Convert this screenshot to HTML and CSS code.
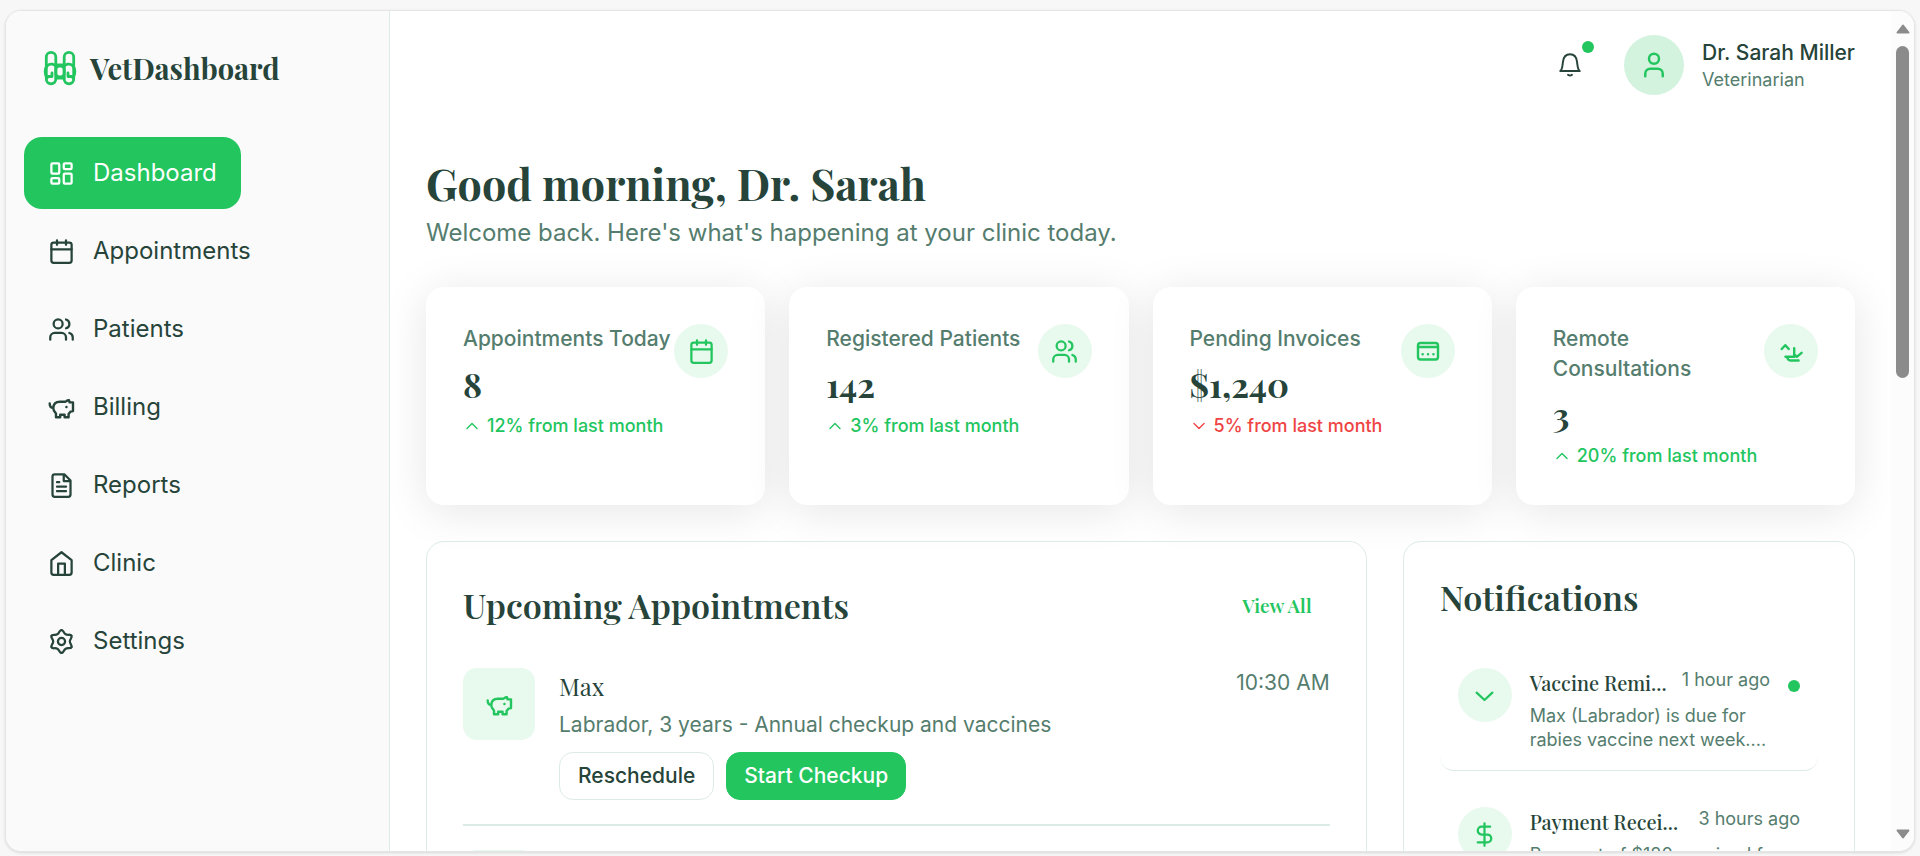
FILE: index.html
```html
<!DOCTYPE html>
<html lang="en">
<head>
<meta charset="utf-8">
<title>VetDashboard</title>
<meta name="viewport" content="width=device-width, initial-scale=1">
<link rel="stylesheet" href="styles.css">
</head>
<body>
<svg class="sprite" aria-hidden="true">
  <symbol id="i-logo" viewBox="0 0 36 36"><rect x="4.300" y="2.300" width="9.500" height="31.500" rx="4.700"/><rect x="22.200" y="2.300" width="9.500" height="31.500" rx="4.700"/><path d="M5 28C2.500 24.500 2.500 18.500 5.500 15.500C8 13 13 14 14.500 17M31 28C33.500 24.500 33.500 18.500 30.500 15.500C28 13 23 14 21.500 17"/><rect x="13.800" y="16" width="8.400" height="11" rx="3.500"/><path d="M14 15H22M14 28H22M6 26.500H10V23M30 26.500H26V23"/></symbol>
  <symbol id="i-grid" viewBox="0 0 24 24"><rect x="3" y="3" width="7" height="9" rx="1"/><rect x="14" y="3" width="7" height="5" rx="1"/><rect x="14" y="12" width="7" height="9" rx="1"/><rect x="3" y="16" width="7" height="5" rx="1"/></symbol>
  <symbol id="i-calendar" viewBox="0 0 24 24"><rect x="3" y="4" width="18" height="18" rx="2"/><path d="M16 2v4M8 2v4M3 10h18"/></symbol>
  <symbol id="i-users" viewBox="0 0 24 24"><path d="M16 21v-2a4 4 0 0 0-4-4H6a4 4 0 0 0-4 4v2"/><circle cx="9" cy="7" r="4"/><path d="M22 21v-2a4 4 0 0 0-3-3.870M16 3.130a4 4 0 0 1 0 7.750"/></symbol>
  <symbol id="i-pig" viewBox="0 0 27 27"><path d="M1.700 9.500C1.700 12.500 3 14 5.400 13.800M5.300 14.300C5.300 10 8 7.700 12 7.700H17.500C18.300 7.700 19 5.900 21 6.300L21.600 8.300L25 8.400V17L22.600 17.600L20.600 20V23.300H16.600V20.800H12.200V23.300H8V19.500C6.500 18 5.300 17 5.300 14.300Z"/><path d="M18.400 13h.1"/></symbol>
  <symbol id="i-file" viewBox="0 0 24 24"><path d="M14.500 2H6a2 2 0 0 0-2 2v16a2 2 0 0 0 2 2h12a2 2 0 0 0 2-2V7.500L14.500 2zM14 2v6h6M16 13H8M16 17H8M10 9H8"/></symbol>
  <symbol id="i-home" viewBox="0 0 24 24"><path d="M3 9l9-7 9 7v11a2 2 0 0 1-2 2H5a2 2 0 0 1-2-2zM9 22V12h6v10"/></symbol>
  <symbol id="i-gear" viewBox="-12 -12 24 24"><circle r="3.200"/><path id="tooth" d="M0-10.200C2-10.200 1.700-7.500 3.700-6.400C5.700-5.300 7.800-6.900 8.830-5.100"/><use href="#tooth" transform="rotate(60)"/><use href="#tooth" transform="rotate(120)"/><use href="#tooth" transform="rotate(180)"/><use href="#tooth" transform="rotate(240)"/><use href="#tooth" transform="rotate(300)"/></symbol>
  <symbol id="i-bell" viewBox="0 0 24 24"><path d="M3 18.500C4.800 17.500 5 14 5.500 10C6 5.500 8 3 12 3S18 5.500 18.500 10C19 14 19.200 17.500 21 18.500ZM10.200 22Q12 23.300 13.800 22"/></symbol>
  <symbol id="i-user" viewBox="0 0 24 24"><path d="M19 21v-2a4 4 0 0 0-4-4H9a4 4 0 0 0-4 4v2"/><circle cx="12" cy="7" r="4"/></symbol>
  <symbol id="i-invoice" viewBox="0 0 27 27"><rect x="4" y="5" width="20" height="16.500" rx="2.500"/><path d="M4 9H24M8.600 16.300h.1M14 16.300h.1M19.400 16.300h.1"/></symbol>
  <symbol id="i-remote" viewBox="0 0 27 27"><path d="M3.700 11L7.200 7.200L10.800 11M16.200 10.200V18.800M7.500 18.800H16.200M16.200 16.300L18.800 18.800L23.600 14.800M9 18.800C9.500 21 10.500 22.500 12.500 22.500H20.600"/></symbol>
  <symbol id="i-up" viewBox="0 0 18 18"><path d="M4 11.500L9 6.500L14 11.500"/></symbol>
  <symbol id="i-down" viewBox="0 0 18 18"><path d="M4 6.500L9 11.500L14 6.500"/></symbol>
  <symbol id="i-chevron" viewBox="0 0 24 24"><path d="M5 9.500l7 6.500 7-6.500"/></symbol>
  <symbol id="i-dollar" viewBox="0 0 24 24"><path d="M12 2v20M17 5H9.500a3.500 3.500 0 0 0 0 7h5a3.500 3.500 0 0 1 0 7H6"/></symbol>
</svg>

<div class="window">
  <aside class="sidebar">
    <div class="brand"><svg class="icon icon-logo"><use href="#i-logo"/></svg><span>VetDashboard</span></div>
    <nav class="nav">
      <a class="nav-link active" href="#"><svg class="icon"><use href="#i-grid"/></svg>Dashboard</a>
      <a class="nav-link" href="#"><svg class="icon"><use href="#i-calendar"/></svg>Appointments</a>
      <a class="nav-link" href="#"><svg class="icon"><use href="#i-users"/></svg>Patients</a>
      <a class="nav-link" href="#"><svg class="icon icon-bold"><use href="#i-pig"/></svg>Billing</a>
      <a class="nav-link" href="#"><svg class="icon"><use href="#i-file"/></svg>Reports</a>
      <a class="nav-link" href="#"><svg class="icon"><use href="#i-home"/></svg>Clinic</a>
      <a class="nav-link" href="#"><svg class="icon"><use href="#i-gear"/></svg>Settings</a>
    </nav>
  </aside>

  <div class="main">
    <header class="topbar">
      <button class="bell" aria-label="Notifications"><svg class="icon icon-bell"><use href="#i-bell"/></svg><span class="dot bell-dot"></span></button>
      <div class="avatar"><svg class="icon icon-user"><use href="#i-user"/></svg></div>
      <div class="profile"><div class="profile-name">Dr. Sarah Miller</div><div class="profile-role">Veterinarian</div></div>
    </header>

    <main class="content">
      <h1>Good morning, Dr. Sarah</h1>
      <p class="welcome">Welcome back. Here's what's happening at your clinic today.</p>

      <section class="stats">
        <article class="stat">
          <div class="stat-text"><div class="stat-label">Appointments Today</div><div class="stat-value">8</div><div class="trend"><svg class="icon icon-trend"><use href="#i-up"/></svg>12% from last month</div></div>
          <div class="round"><svg class="icon"><use href="#i-calendar"/></svg></div>
        </article>
        <article class="stat">
          <div class="stat-text"><div class="stat-label">Registered Patients</div><div class="stat-value">142</div><div class="trend"><svg class="icon icon-trend"><use href="#i-up"/></svg>3% from last month</div></div>
          <div class="round"><svg class="icon"><use href="#i-users"/></svg></div>
        </article>
        <article class="stat">
          <div class="stat-text"><div class="stat-label">Pending Invoices</div><div class="stat-value">$1,240</div><div class="trend trend-down"><svg class="icon icon-trend"><use href="#i-down"/></svg>5% from last month</div></div>
          <div class="round"><svg class="icon icon-bold"><use href="#i-invoice"/></svg></div>
        </article>
        <article class="stat">
          <div class="stat-text"><div class="stat-label">Remote Consultations</div><div class="stat-value">3</div><div class="trend"><svg class="icon icon-trend"><use href="#i-up"/></svg>20% from last month</div></div>
          <div class="round"><svg class="icon icon-bold"><use href="#i-remote"/></svg></div>
        </article>
      </section>

      <div class="panels">
        <section class="panel panel-wide">
          <div class="panel-head"><h2>Upcoming Appointments</h2><button class="view-all">View All</button></div>
          <article class="visit">
            <div class="pet"><svg class="icon icon-bold"><use href="#i-pig"/></svg></div>
            <div class="visit-body">
              <h3>Max</h3>
              <p class="visit-note">Labrador, 3 years - Annual checkup and vaccines</p>
              <div class="actions"><button class="btn">Reschedule</button><button class="btn btn-primary">Start Checkup</button></div>
            </div>
            <time class="visit-time">10:30 AM</time>
          </article>
          <article class="visit"><div class="pet"></div></article>
        </section>

        <section class="panel">
          <h2 class="notes-title">Notifications</h2>
          <div class="notes">
            <article class="note">
              <div class="round"><svg class="icon"><use href="#i-chevron"/></svg></div>
              <div class="note-body">
                <div class="note-head"><h4>Vaccine Remi...</h4><time>1 hour ago</time></div>
                <p>Max (Labrador) is due for rabies vaccine next week....</p>
              </div>
              <span class="dot note-dot"></span>
            </article>
            <article class="note">
              <div class="round"><svg class="icon"><use href="#i-dollar"/></svg></div>
              <div class="note-body">
                <div class="note-head"><h4>Payment Recei...</h4><time>3 hours ago</time></div>
                <p>Payment of $180 received f</p>
              </div>
            </article>
          </div>
        </section>
      </div>
    </main>
  </div>

  <div class="scrollbar" aria-hidden="true">
    <svg class="arrow" viewBox="0 0 14 10"><path d="M7 1.500L12.500 8.500H1.500Z"/></svg>
    <div class="track"><div class="thumb"></div></div>
    <svg class="arrow" viewBox="0 0 14 10"><path d="M7 8.500L12.500 1.500H1.500Z"/></svg>
  </div>
</div>
</body>
</html>
```

FILE: styles.css
```css
:root {
  --ink: #264439;
  --muted: #557d6e;
  --green: #22c55e;
  --tint: #e8f9ee;
  --line: #dcebe5;
  --serif: "Playfair Display", "Liberation Serif", serif;
}

* { box-sizing: border-box; }

body {
  margin: 0;
  height: 100vh;
  padding: 10px 5px 4px;
  background: #f7f7f7;
  color: var(--ink);
  font: 400 21px/30px Inter, "Liberation Sans", sans-serif;
  overflow: hidden;
}

h1, h2, h3, h4, p { margin: 0; }
button { font: inherit; color: inherit; background: none; border: 0; cursor: pointer; }
.sprite { display: none; }

.icon {
  width: 27px;
  height: 27px;
  flex: none;
  fill: none;
  stroke: currentColor;
  stroke-width: 2;
  stroke-linecap: round;
  stroke-linejoin: round;
}
.icon-bold { stroke-width: 2.4; }

.dot { width: 12px; height: 12px; border-radius: 50%; background: var(--green); }

.window {
  display: flex;
  height: 100%;
  background: #fff;
  border: 1px solid #e5e5e5;
  border-radius: 16px;
  box-shadow: 0 1px 3px rgba(0, 0, 0, .12);
  overflow: hidden;
}

/* Sidebar */
.sidebar {
  flex: 0 0 384px;
  padding: 36px 18px;
  background: #fafafa;
  border-right: 1px solid var(--line);
}
.brand {
  display: flex;
  align-items: center;
  gap: 12px;
  height: 42px;
  padding-left: 18px;
  font: 700 29px/42px var(--serif);
}
.icon-logo { width: 36px; height: 36px; color: var(--green); stroke-width: 2.8; }
.nav { display: flex; flex-direction: column; align-items: flex-start; gap: 6px; margin-top: 48px; }
.nav-link {
  display: flex;
  align-items: center;
  gap: 18px;
  height: 72px;
  padding: 0 24px;
  border-radius: 18px;
  color: inherit;
  font-size: 24px;
  text-decoration: none;
}
.nav-link.active { background: var(--green); color: #fff; }

/* Main column */
.main { flex: 1; min-width: 0; overflow: hidden; }
.topbar { display: flex; align-items: center; justify-content: flex-end; height: 108px; padding: 0 36px; }
.bell { position: relative; display: grid; place-items: center; width: 60px; height: 60px; margin-right: 24px; padding: 0 0 2px; }
.icon-bell { stroke-width: 1.8; width: 26px; height: 26px; }
.bell-dot { position: absolute; top: 6px; right: 6px; }
.avatar { display: grid; place-items: center; width: 60px; height: 60px; margin-right: 18px; border-radius: 50%; background: #d3f3df; color: var(--green); }
.icon-user { width: 30px; height: 30px; }
.profile { padding-top: 2px; }
.profile-name { font-weight: 500; line-height: 27px; }
.profile-role { color: var(--muted); font-size: 18px; line-height: 27px; }

.content { padding: 36px; }
h1 { margin-bottom: 4px; font: 700 43px/56px var(--serif); }
.welcome { color: var(--muted); font-size: 24px; line-height: 36px; }

.stats { display: grid; grid-template-columns: repeat(4, 1fr); gap: 24px; margin-top: 36px; }
.stat {
  display: flex;
  justify-content: space-between;
  padding: 37px 37px 36px;
  border-radius: 18px;
  background: #fff;
  box-shadow: 0 6px 45px rgba(0, 0, 0, .1);
}
.stat-text { flex: 1; min-width: 0; }
.stat-label { color: var(--muted); font-weight: 500; }
.stat-value { margin: 10px 0 8px; font: 700 34px/40px var(--serif); }
.trend { display: flex; align-items: center; gap: 6px; color: var(--green); font-size: 18px; font-weight: 500; line-height: 27px; white-space: nowrap; }
.trend-down { color: #ef4444; }
.icon-trend { width: 18px; height: 18px; stroke-width: 1.4; }
.round { display: grid; place-items: center; flex: none; width: 54px; height: 54px; border-radius: 50%; background: var(--tint); color: var(--green); }

/* Panels */
.panels { display: grid; grid-template-columns: repeat(3, 1fr); gap: 36px; margin-top: 36px; }
.panel { min-width: 0; padding: 36px; border: 1px solid var(--line); border-radius: 18px; }
.panel-wide { grid-column: span 2; }
.panel-head { display: flex; align-items: center; justify-content: space-between; height: 54px; margin-bottom: 36px; }
h2 { font: 600 34px/38px var(--serif); }
.view-all { padding: 9px 18px; color: var(--green); font: 600 19px/36px var(--serif); }

.visit { display: flex; gap: 24px; margin-bottom: 24px; padding-bottom: 24px; border-bottom: 2px solid var(--line); }
.pet { display: grid; place-items: center; flex: none; width: 72px; height: 72px; border-radius: 14px; background: var(--tint); color: var(--green); }
.visit-body { flex: 1; min-width: 0; }
h3 { margin-bottom: 6px; font: 400 24px/36px var(--serif); }
.visit-note, .visit-time { color: var(--muted); }
.actions { display: flex; gap: 12px; margin-top: 12px; }
.btn { height: 48px; padding: 0 18px; border: 1px solid var(--line); border-radius: 14px; font-weight: 500; }
.btn-primary { padding: 0 17px; border-color: var(--green); background: var(--green); color: #fff; }

.notes-title { margin-bottom: 34px; }
.notes { display: flex; flex-direction: column; gap: 18px; }
.note { display: flex; gap: 18px; padding: 18px; border-bottom: 1px solid var(--line); border-radius: 14px; }
.note-body { flex: 1; min-width: 0; color: var(--muted); font-size: 18px; line-height: 24px; }
.note-head { display: flex; justify-content: space-between; }
h4 { margin-bottom: 6px; color: var(--ink); font: 500 20px/30px var(--serif); white-space: nowrap; }
.note-head time { white-space: nowrap; }
.note-dot { flex: none; margin-top: 12px; }

/* Scrollbar */
.scrollbar { display: flex; flex-direction: column; align-items: center; width: 23px; padding: 13px 0 12px; background: #fcfcfc; }
.arrow { width: 14px; height: 10px; fill: #8b8b8b; stroke: #8b8b8b; stroke-width: 2; stroke-linejoin: round; }
.track { flex: 1; padding: 12px 0; }
.thumb { width: 13px; height: 43%; border-radius: 7px; background: #8b8b8b; }
```
